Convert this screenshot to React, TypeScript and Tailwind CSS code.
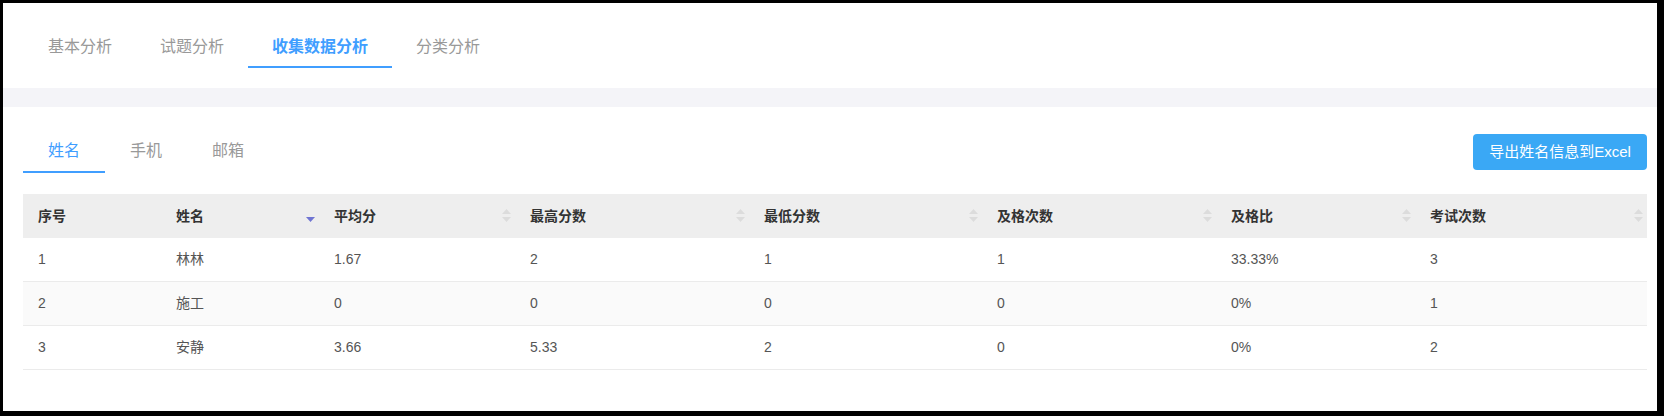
import React from "react";

const font = {
  fontFamily: '"Liberation Sans", Arial, "Noto Sans CJK SC", sans-serif',
};

const topTabs = ["基本分析", "试题分析", "收集数据分析", "分类分析"];
const subTabs = ["姓名", "手机", "邮箱"];

const columns = [
  { label: "序号", sort: "none" },
  { label: "姓名", sort: "desc" },
  { label: "平均分", sort: "idle" },
  { label: "最高分数", sort: "idle" },
  { label: "最低分数", sort: "idle" },
  { label: "及格次数", sort: "idle" },
  { label: "及格比", sort: "idle" },
  { label: "考试次数", sort: "idle" },
];

const rows = [
  ["1", "林林", "1.67", "2", "1", "1", "33.33%", "3"],
  ["2", "施工", "0", "0", "0", "0", "0%", "1"],
  ["3", "安静", "3.66", "5.33", "2", "0", "0%", "2"],
];

const grid =
  "grid grid-cols-[138px_158px_196px_234px_233px_234px_199px_1fr]";

function SortIcon({ state }: { state: string }) {
  if (state === "none") return null;
  return (
    <svg width="9" height="14" viewBox="0 0 9 14" className="shrink-0">
      <path
        d="M4.5 0 L9 5 L0 5 Z"
        fill={state === "desc" ? "transparent" : "#dcdcdc"}
      />
      <path
        d="M0 8 L9 8 L4.5 13 Z"
        fill={state === "desc" ? "#6f74d2" : "#dcdcdc"}
      />
    </svg>
  );
}

export default function App() {
  return (
    <div
      style={font}
      className="box-border h-[416px] w-[1664px] border-t-[3px] border-r-[7px] border-b-[5px] border-l-[3px] border-black bg-white"
    >
      {/* top analysis tabs */}
      <div className="flex h-[85px] pt-[25px] pl-[21px]">
        {topTabs.map((t, i) => (
          <div
            key={t}
            className={`box-border flex h-10 items-center border-b-2 px-6 text-[16px] ${
              i === 2
                ? "border-[#409eff] font-semibold text-[#409eff]"
                : "border-transparent text-[#999999]"
            }`}
          >
            {t}
          </div>
        ))}
      </div>

      <div className="h-[19px] bg-[#f4f4f8]" />

      <div className="pr-[10px] pl-[20px]">
        {/* sub tabs + export */}
        <div className="flex items-end justify-between pt-[24px]">
          <div className="flex">
            {subTabs.map((t, i) => (
              <div
                key={t}
                className={`box-border flex h-[42px] items-center border-b-2 px-[25px] text-[16px] ${
                  i === 0
                    ? "border-[#409eff] text-[#409eff]"
                    : "border-transparent text-[#999999]"
                }`}
              >
                {t}
              </div>
            ))}
          </div>
          <button
            type="button"
            className="mb-[3px] h-9 w-[174px] rounded-[4px] bg-[#3aa8f5] text-[15px] text-white"
          >
            导出姓名信息到Excel
          </button>
        </div>

        {/* table */}
        <div className="mt-[21px]">
          <div className={`${grid} h-11 bg-[#eeeeee]`}>
            {columns.map((c) => (
              <div
                key={c.label}
                className="flex items-center justify-between pr-[4px] pl-[15px] text-[14px] font-bold text-[#333333]"
              >
                <span>{c.label}</span>
                <SortIcon state={c.sort} />
              </div>
            ))}
          </div>
          {rows.map((r, i) => (
            <div
              key={r[0]}
              className={`${grid} box-border h-11 border-b border-[#ebebeb] ${
                i === 1 ? "bg-[#fafafa]" : "bg-white"
              }`}
            >
              {r.map((cell, j) => (
                <div
                  key={j}
                  className="flex items-center pl-[15px] text-[14px] text-[#555555]"
                >
                  {cell}
                </div>
              ))}
            </div>
          ))}
        </div>
      </div>
    </div>
  );
}
